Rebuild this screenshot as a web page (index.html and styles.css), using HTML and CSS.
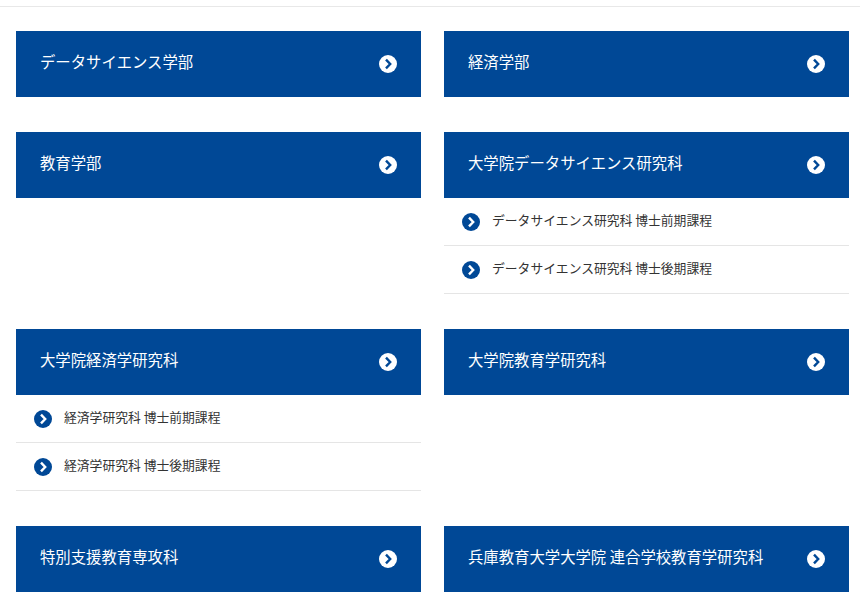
FILE: index.html

```html
<!DOCTYPE html>
<html lang="ja">
<head>
  <meta charset="UTF-8">
  <title>学部・研究科</title>
  <link rel="stylesheet" href="styles.css">
</head>
<body>
  <svg class="defs" width="0" height="0">
    <symbol id="arrow" viewBox="0 0 18 18">
      <path d="M7 4.6 L11.2 9 L7 13.4" fill="none" stroke-width="2.4"/>
    </symbol>
  </svg>

  <div class="rule"></div>

  <div class="faculties">
    <div class="faculty">
      <a class="faculty-head"><span>データサイエンス学部</span><i class="icon icon-white"><svg><use href="#arrow"/></svg></i></a>
    </div>
    <div class="faculty">
      <a class="faculty-head"><span>経済学部</span><i class="icon icon-white"><svg><use href="#arrow"/></svg></i></a>
    </div>

    <div class="faculty">
      <a class="faculty-head"><span>教育学部</span><i class="icon icon-white"><svg><use href="#arrow"/></svg></i></a>
    </div>
    <div class="faculty">
      <a class="faculty-head"><span>大学院データサイエンス研究科</span><i class="icon icon-white"><svg><use href="#arrow"/></svg></i></a>
      <ul class="courses">
        <li><i class="icon icon-blue"><svg><use href="#arrow"/></svg></i><span>データサイエンス研究科 博士前期課程</span></li>
        <li><i class="icon icon-blue"><svg><use href="#arrow"/></svg></i><span>データサイエンス研究科 博士後期課程</span></li>
      </ul>
    </div>

    <div class="faculty">
      <a class="faculty-head"><span>大学院経済学研究科</span><i class="icon icon-white"><svg><use href="#arrow"/></svg></i></a>
      <ul class="courses">
        <li><i class="icon icon-blue"><svg><use href="#arrow"/></svg></i><span>経済学研究科 博士前期課程</span></li>
        <li><i class="icon icon-blue"><svg><use href="#arrow"/></svg></i><span>経済学研究科 博士後期課程</span></li>
      </ul>
    </div>
    <div class="faculty">
      <a class="faculty-head"><span>大学院教育学研究科</span><i class="icon icon-white"><svg><use href="#arrow"/></svg></i></a>
    </div>

    <div class="faculty">
      <a class="faculty-head"><span>特別支援教育専攻科</span><i class="icon icon-white"><svg><use href="#arrow"/></svg></i></a>
    </div>
    <div class="faculty">
      <a class="faculty-head"><span>兵庫教育大学大学院 連合学校教育学研究科</span><i class="icon icon-white"><svg><use href="#arrow"/></svg></i></a>
    </div>
  </div>
</body>
</html>
```

FILE: styles.css

```css
html, body {
  margin: 0;
  padding: 0;
  background: #fff;
}
body {
  font-family: "Noto Sans CJK JP", "Noto Sans", sans-serif;
  color: #333;
  overflow: hidden;
}
.defs {
  display: block;
  height: 0;
}
.rule {
  height: 1px;
  margin-top: 6px;
  background: #e8e8e8;
}
.faculties {
  display: grid;
  grid-template-columns: 405.4px 405.4px;
  column-gap: 22.6px;
  row-gap: 35.4px;
  padding: 24px 0 0 16px;
}
.faculty-head {
  display: flex;
  align-items: center;
  justify-content: space-between;
  box-sizing: border-box;
  height: 65.6px;
  padding: 0 24px;
  background: #004896;
  color: #fff;
  font-size: 15.36px;
  line-height: 1;
}
.faculty-head span {
  margin-top: -4px;
}
.icon {
  display: block;
  flex: none;
  width: 18px;
  height: 18px;
  border-radius: 50%;
}
.icon svg {
  display: block;
  width: 18px;
  height: 18px;
}
.icon-white {
  background: #fff;
  stroke: #004896;
  margin-top: 1px;
}
.icon-blue {
  background: #004896;
  stroke: #fff;
  margin-top: 1px;
}
.courses {
  list-style: none;
  margin: 0;
  padding: 0;
}
.courses li {
  display: flex;
  align-items: center;
  gap: 12px;
  box-sizing: border-box;
  height: 48px;
  padding-left: 18px;
  border-bottom: 1px solid #e5e5e5;
  font-size: 12.8px;
}
.courses li span {
  margin-top: -3px;
}
```
